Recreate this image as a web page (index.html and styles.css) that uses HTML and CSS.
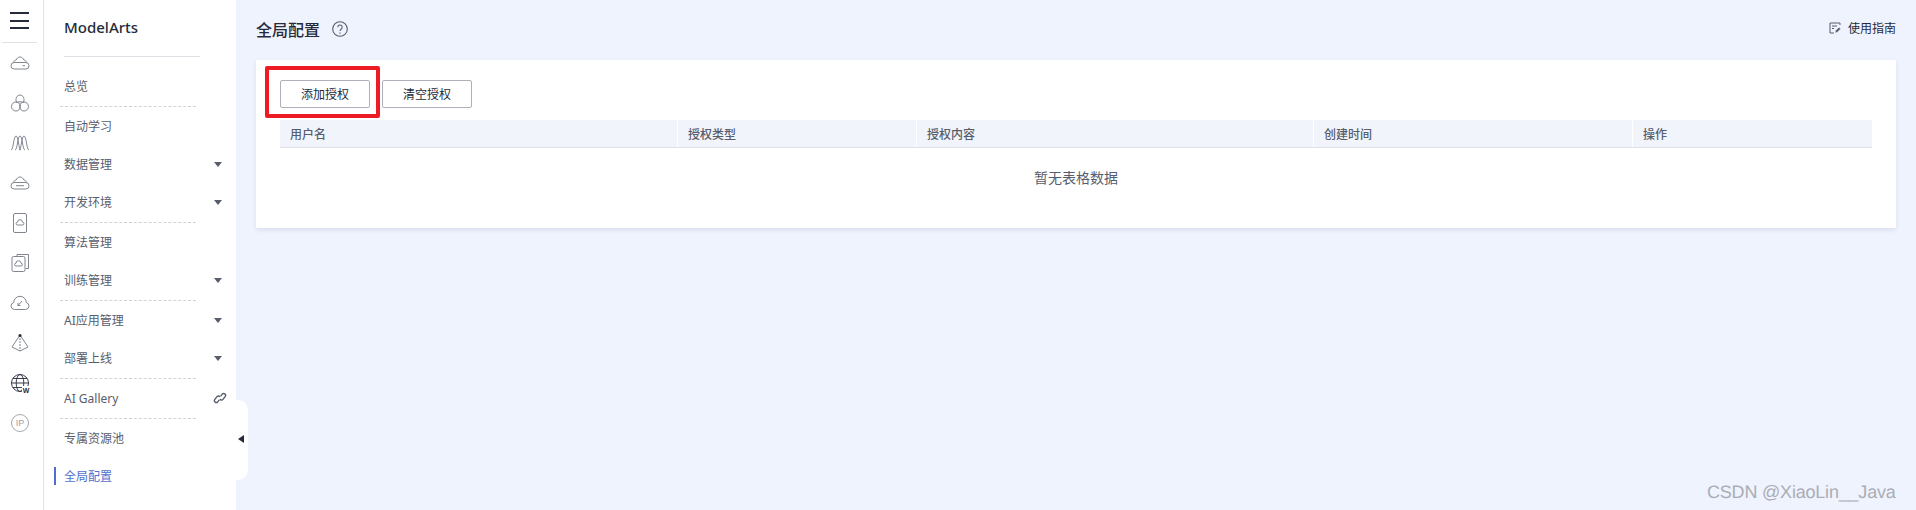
FILE: index.html
```html
<!DOCTYPE html>
<html lang="zh-CN">
<head>
<meta charset="utf-8">
<title>全局配置</title>
<link rel="stylesheet" href="styles.css">
</head>
<body>
<div class="app">
  <nav class="rail">
    <div class="burger"><span></span><span></span><span></span></div>
    <div class="rail-icons">
      <svg class="ri" viewBox="0 0 20 20"><path d="M3.500 9.500C3.800 8 5 7.200 6 7.200 6.800 5.200 8.300 4 10 4s3.200 1.200 4 3.200c1 0 2.200.8 2.500 2.300"/><rect x="1" y="9.500" width="18" height="6.500" rx="3.200"/><path d="M12.500 12.700h2.500"/></svg>
      <svg class="ri" viewBox="0 0 20 20"><path d="M6.500 9.500C5 5.500 7 2 10 2s5 3.500 3.500 7.500"/><circle cx="6" cy="13.500" r="4.500"/><circle cx="14" cy="13.500" r="4.500"/><path d="M6.500 9.500c2-1 5-1 7 0"/></svg>
      <svg class="ri" viewBox="0 0 20 20"><path d="M1 17C3.500 17 3.500 3 6 3s2.500 14 5 14"/><path d="M5 17C7.500 17 7.500 3 10 3s2.500 14 5 14"/><path d="M9 17c2.500 0 2.500-14 5-14s2.500 14 5 14"/></svg>
      <svg class="ri" viewBox="0 0 20 20"><path d="M3.500 9.500C3.800 8 5 7.200 6 7.200 6.800 5.200 8.300 4 10 4s3.200 1.200 4 3.200c1 0 2.200.8 2.500 2.300"/><rect x="1" y="9.500" width="18" height="6.500" rx="3.200"/><path d="M6 12.700h8"/></svg>
      <svg class="ri" viewBox="0 0 20 20"><rect x="3.500" y="0.500" width="13" height="19" rx="1.500"/><path d="M7.500 12h5a1.400 1.400 0 0 0 0-2.800 2.500 2.500 0 0 0-5 0 1.400 1.400 0 0 0 0 2.800z"/></svg>
      <svg class="ri" viewBox="0 0 20 20"><path d="M7 3V1.500h11.500v14H16"/><rect x="2" y="3.500" width="13" height="15" rx="1.500"/><path d="M6 13h5a1.400 1.400 0 0 0 0-2.800 2.500 2.500 0 0 0-5 0 1.400 1.400 0 0 0 0 2.800z"/></svg>
      <svg class="ri" viewBox="0 0 20 20"><path d="M4.500 16.500h11a3.500 3.500 0 0 0 .8-6.900 6.300 6.300 0 0 0-12.600 0 3.500 3.500 0 0 0 .8 6.900z"/><path d="M8 12.500l4-4.500M8 10v2.500h2.500"/></svg>
      <svg class="ri" viewBox="0 0 20 20"><path d="M10 2L2 14l8 4 8-4z"/><path d="M10 2v16" stroke-dasharray="2 1"/><circle class="ri-dot" cx="10" cy="2.500" r="1.500"/></svg>
      <svg class="ri ri-dark" viewBox="0 0 20 20"><circle cx="10" cy="10" r="8.500"/><ellipse cx="10" cy="10" rx="3.800" ry="8.500"/><path d="M1.500 10h17M2.800 5.500h14.400M2.800 14.500h14.400"/><rect class="ri-w" x="12" y="13" width="8" height="7"/><text class="ri-wtext" x="16" y="19.500">W</text></svg>
      <svg class="ri ri-soft" viewBox="0 0 20 20"><circle cx="10" cy="10" r="8.500"/><text class="ri-iptext" x="10" y="13">IP</text></svg>
    </div>
  </nav>

  <aside class="side">
    <div class="brand">ModelArts</div>
    <ul class="menu">
      <li class="item">总览</li>
      <li class="dash"></li>
      <li class="item">自动学习</li>
      <li class="item">数据管理<i class="caret"></i></li>
      <li class="item">开发环境<i class="caret"></i></li>
      <li class="dash"></li>
      <li class="item">算法管理</li>
      <li class="item">训练管理<i class="caret"></i></li>
      <li class="dash"></li>
      <li class="item">AI应用管理<i class="caret"></i></li>
      <li class="item">部署上线<i class="caret"></i></li>
      <li class="dash"></li>
      <li class="item">AI Gallery
        <svg class="link" viewBox="0 0 14 14"><path d="M6.300 8.800L4.700 10.900a1.900 1.900 0 0 1-3-2.300L4 5.600a1.900 1.900 0 0 1 3.100.3"/><path d="M7.700 5.200l1.600-2.100a1.900 1.900 0 0 1 3 2.300L10 8.400a1.900 1.900 0 0 1-3.100-.3"/></svg>
      </li>
      <li class="dash"></li>
      <li class="item">专属资源池</li>
      <li class="item active">全局配置</li>
    </ul>
    <div class="collapse"><i></i></div>
  </aside>

  <main class="main">
    <header class="head">
      <div class="title">
        <h1>全局配置</h1>
        <svg class="help" viewBox="0 0 16 16"><circle cx="8" cy="8" r="7.300"/><path d="M5.800 6.200a2.200 2.200 0 1 1 3.500 1.800C8.400 8.700 8 9 8 10"/><path d="M8 11.500v1.200"/></svg>
      </div>
      <a class="guide">
        <svg viewBox="0 0 12 12"><path d="M11 3V1H1v10h4"/><path d="M3 4h5M3 6.500h2"/><path class="pen" d="M6 11l.6-2.400L10 5.200l1.700 1.700-3.400 3.400z"/></svg>
        使用指南
      </a>
    </header>

    <section class="card">
      <div class="toolbar">
        <button class="btn marked">添加授权</button>
        <button class="btn">清空授权</button>
      </div>
      <div class="table">
        <div class="thead">
          <div class="th c1">用户名</div>
          <div class="th c2">授权类型</div>
          <div class="th c3">授权内容</div>
          <div class="th c4">创建时间</div>
          <div class="th c5">操作</div>
        </div>
        <div class="empty">暂无表格数据</div>
      </div>
    </section>
  </main>
</div>
<div class="watermark">CSDN @XiaoLin__Java</div>
</body>
</html>
```
FILE: styles.css
```css
*, *::before, *::after { box-sizing: border-box; }
html, body { margin: 0; height: 100%; overflow: hidden; }
body {
  font-family: "Noto Sans", "Noto Sans CJK SC", sans-serif;
  font-size: 12px;
  color: #575d6c;
  background: #eff3fe;
}
.app { display: flex; height: 510px; }

.rail {
  width: 44px;
  flex: none;
  background: #fff;
  border-right: 1px solid #dfe1e6;
  padding: 0 6px 0 2px;
}
.burger {
  height: 43px;
  border-bottom: 1px solid #dfe1e6;
  padding: 12px 8px 0;
  display: flex;
  flex-direction: column;
  gap: 5.500px;
}
.burger span { display: block; height: 2px; background: #252b3a; }
.rail-icons {
  display: flex;
  flex-direction: column;
  align-items: center;
  gap: 20px;
  padding-top: 10px;
}
.ri {
  width: 20px;
  height: 20px;
  fill: none;
  stroke: #737884;
  stroke-width: .9;
}
.ri-dark { stroke: #252b3a; }
.ri-soft { stroke: #9a9ea8; }
.ri-dot { fill: #252b3a; stroke: none; }
.ri-w { fill: #fff; stroke: none; }
.ri-wtext { font-size: 7px; font-weight: 700; fill: #252b3a; stroke: none; text-anchor: middle; font-family: "Liberation Sans", sans-serif; }
.ri-iptext { font-size: 9px; fill: #9a9ea8; stroke: none; text-anchor: middle; font-family: "Liberation Sans", sans-serif; }

.side {
  width: 192px;
  flex: none;
  background: #fff;
  position: relative;
  padding-left: 16px;
}
.brand {
  width: 136px;
  margin-left: 4px;
  height: 57px;
  padding-top: 15px;
  border-bottom: 1px solid #dfe1e6;
  font-size: 15px;
  line-height: 24px;
  font-weight: 500;
  color: #252b3a;
}
.menu { list-style: none; margin: 11px 0 0; padding: 0; }
.item {
  height: 38px;
  line-height: 38px;
  padding-left: 4px;
  position: relative;
}
.dash {
  width: 136px;
  height: 2px;
  border-top: 1px dashed #cfd2d8;
}
.caret {
  position: absolute;
  left: 154px;
  top: 16px;
  border-style: solid;
  border-width: 5px 4px 0;
  border-color: #575d6c transparent transparent;
}
.link {
  position: absolute;
  left: 153px;
  top: 11px;
  width: 14px;
  height: 14px;
  fill: none;
  stroke: #575d6c;
  stroke-width: 1.400;
}
.active { color: #526ecc; }
.active::before {
  content: "";
  position: absolute;
  left: -6px;
  top: 9px;
  width: 2px;
  height: 18px;
  background: #526ecc;
}
.collapse {
  position: absolute;
  left: 192px;
  top: 400px;
  width: 12px;
  height: 80px;
  background: #fff;
  border-radius: 0 10px 10px 0;
}
.collapse i {
  position: absolute;
  left: 2px;
  top: 35px;
  border-style: solid;
  border-width: 4px 6px 4px 0;
  border-color: transparent #252b3a transparent transparent;
}

.main { flex: 1; min-width: 0; padding: 0 20px; }
.head {
  height: 60px;
  display: flex;
  justify-content: space-between;
  align-items: flex-start;
}
.title { display: flex; align-items: center; height: 57px; gap: 12px; }
h1 {
  margin: 0;
  font-size: 16px;
  line-height: 24px;
  font-weight: 500;
  color: #252b3a;
  font-family: "Noto Sans CJK SC", sans-serif;
}
.help { width: 16px; height: 16px; fill: none; stroke: #575d6c; stroke-width: 1.100; }
.guide {
  display: flex;
  align-items: center;
  gap: 7px;
  height: 55px;
  color: #252b3a;
}
.guide svg { width: 12px; height: 12px; fill: none; stroke: #575d6c; stroke-width: 1; }
.guide .pen { fill: #575d6c; stroke: #fff; stroke-width: .500; }

.card {
  height: 168px;
  background: #fff;
  box-shadow: 0 2px 4px rgba(120, 130, 170, .18);
  padding: 20px 24px 0;
}
.toolbar { display: flex; gap: 12px; height: 28px; margin-bottom: 12px; }
.btn {
  width: 90px;
  height: 28px;
  padding: 0;
  background: #fff;
  border: 1px solid #adb0b8;
  border-radius: 2px;
  font: inherit;
  color: #252b3a;
  position: relative;
}
.marked::after {
  content: "";
  position: absolute;
  left: -16px;
  top: -15px;
  width: 115px;
  height: 52px;
  border: 4px solid #ed1c24;
  border-radius: 2px;
}
.thead {
  display: grid;
  grid-template-columns: 398px 239px 397px 319px 1fr;
  height: 28px;
  background: #f1f4fb;
  border-bottom: 1px solid #dfe1e6;
}
.th {
  line-height: 30px;
  height: 27px;
  padding-left: 10px;
  font-weight: 500;
  border-right: 1px solid #fff;
}
.th:last-child { border-right: 0; }
.empty {
  text-align: center;
  font-size: 14px;
  line-height: 20px;
  padding-top: 20px;
}

.watermark {
  position: absolute;
  left: 1707px;
  top: 481px;
  font-family: "Liberation Sans", sans-serif;
  font-size: 18px;
  letter-spacing: -.2px;
  text-rendering: geometricPrecision;
  line-height: 22px;
  color: #aaadb5;
  white-space: nowrap;
}
```
